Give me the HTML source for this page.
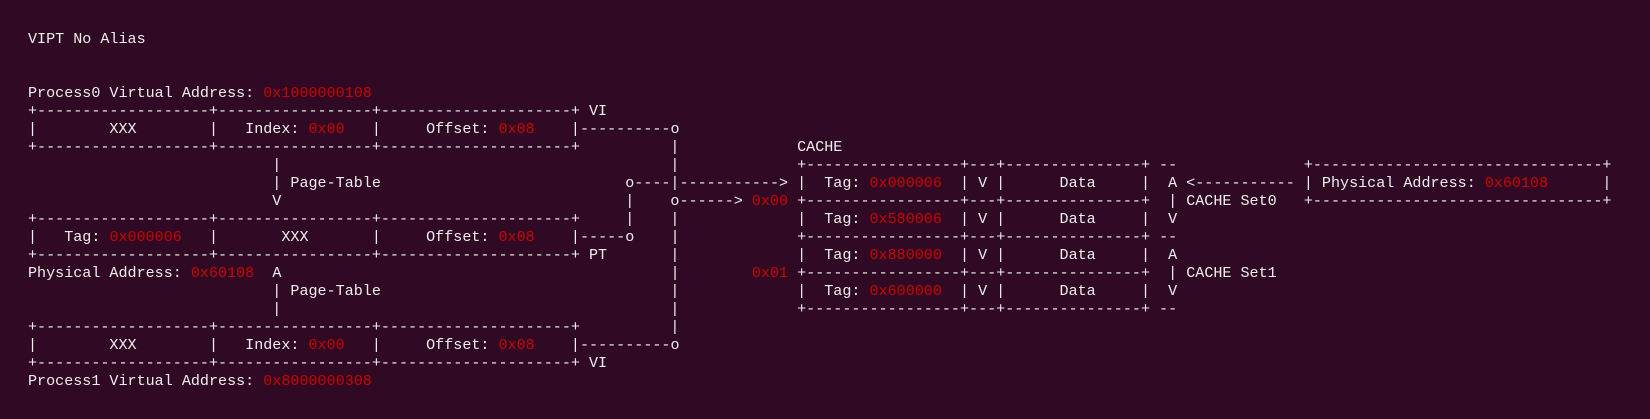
<!DOCTYPE html>
<html><head><meta charset="utf-8"><style>
html,body{margin:0;padding:0;background:#300a24;width:1650px;height:419px;overflow:hidden}
pre{position:absolute;left:28px;top:30px;margin:0;font-family:"Liberation Mono","DejaVu Sans Mono",monospace;font-size:15.08px;line-height:18px;color:#eeeeec;white-space:pre}
.r{color:#cc0000}
</style></head><body>
<pre>VIPT No Alias


Process0 Virtual Address: <span class="r">0x1000000108</span>
+-------------------+-----------------+---------------------+ VI
|        XXX        |   Index: <span class="r">0x00</span>   |     Offset: <span class="r">0x08</span>    |----------o
+-------------------+-----------------+---------------------+          |             CACHE
                           |                                           |             +-----------------+---+---------------+ --              +--------------------------------+
                           | Page-Table                           o----|-----------> |  Tag: <span class="r">0x000006</span>  | V |      Data     |  A <----------- | Physical Address: <span class="r">0x60108</span>      |
                           V                                      |    o------> <span class="r">0x00</span> +-----------------+---+---------------+  | CACHE Set0   +--------------------------------+
+-------------------+-----------------+---------------------+     |    |             |  Tag: <span class="r">0x580006</span>  | V |      Data     |  V
|   Tag: <span class="r">0x000006</span>   |       XXX       |     Offset: <span class="r">0x08</span>    |-----o    |             +-----------------+---+---------------+ --
+-------------------+-----------------+---------------------+ PT       |             |  Tag: <span class="r">0x880000</span>  | V |      Data     |  A
Physical Address: <span class="r">0x60108</span>  A                                           |        <span class="r">0x01</span> +-----------------+---+---------------+  | CACHE Set1
                           | Page-Table                                |             |  Tag: <span class="r">0x600000</span>  | V |      Data     |  V
                           |                                           |             +-----------------+---+---------------+ --
+-------------------+-----------------+---------------------+          |
|        XXX        |   Index: <span class="r">0x00</span>   |     Offset: <span class="r">0x08</span>    |----------o
+-------------------+-----------------+---------------------+ VI
Process1 Virtual Address: <span class="r">0x8000000308</span></pre>
</body></html>
